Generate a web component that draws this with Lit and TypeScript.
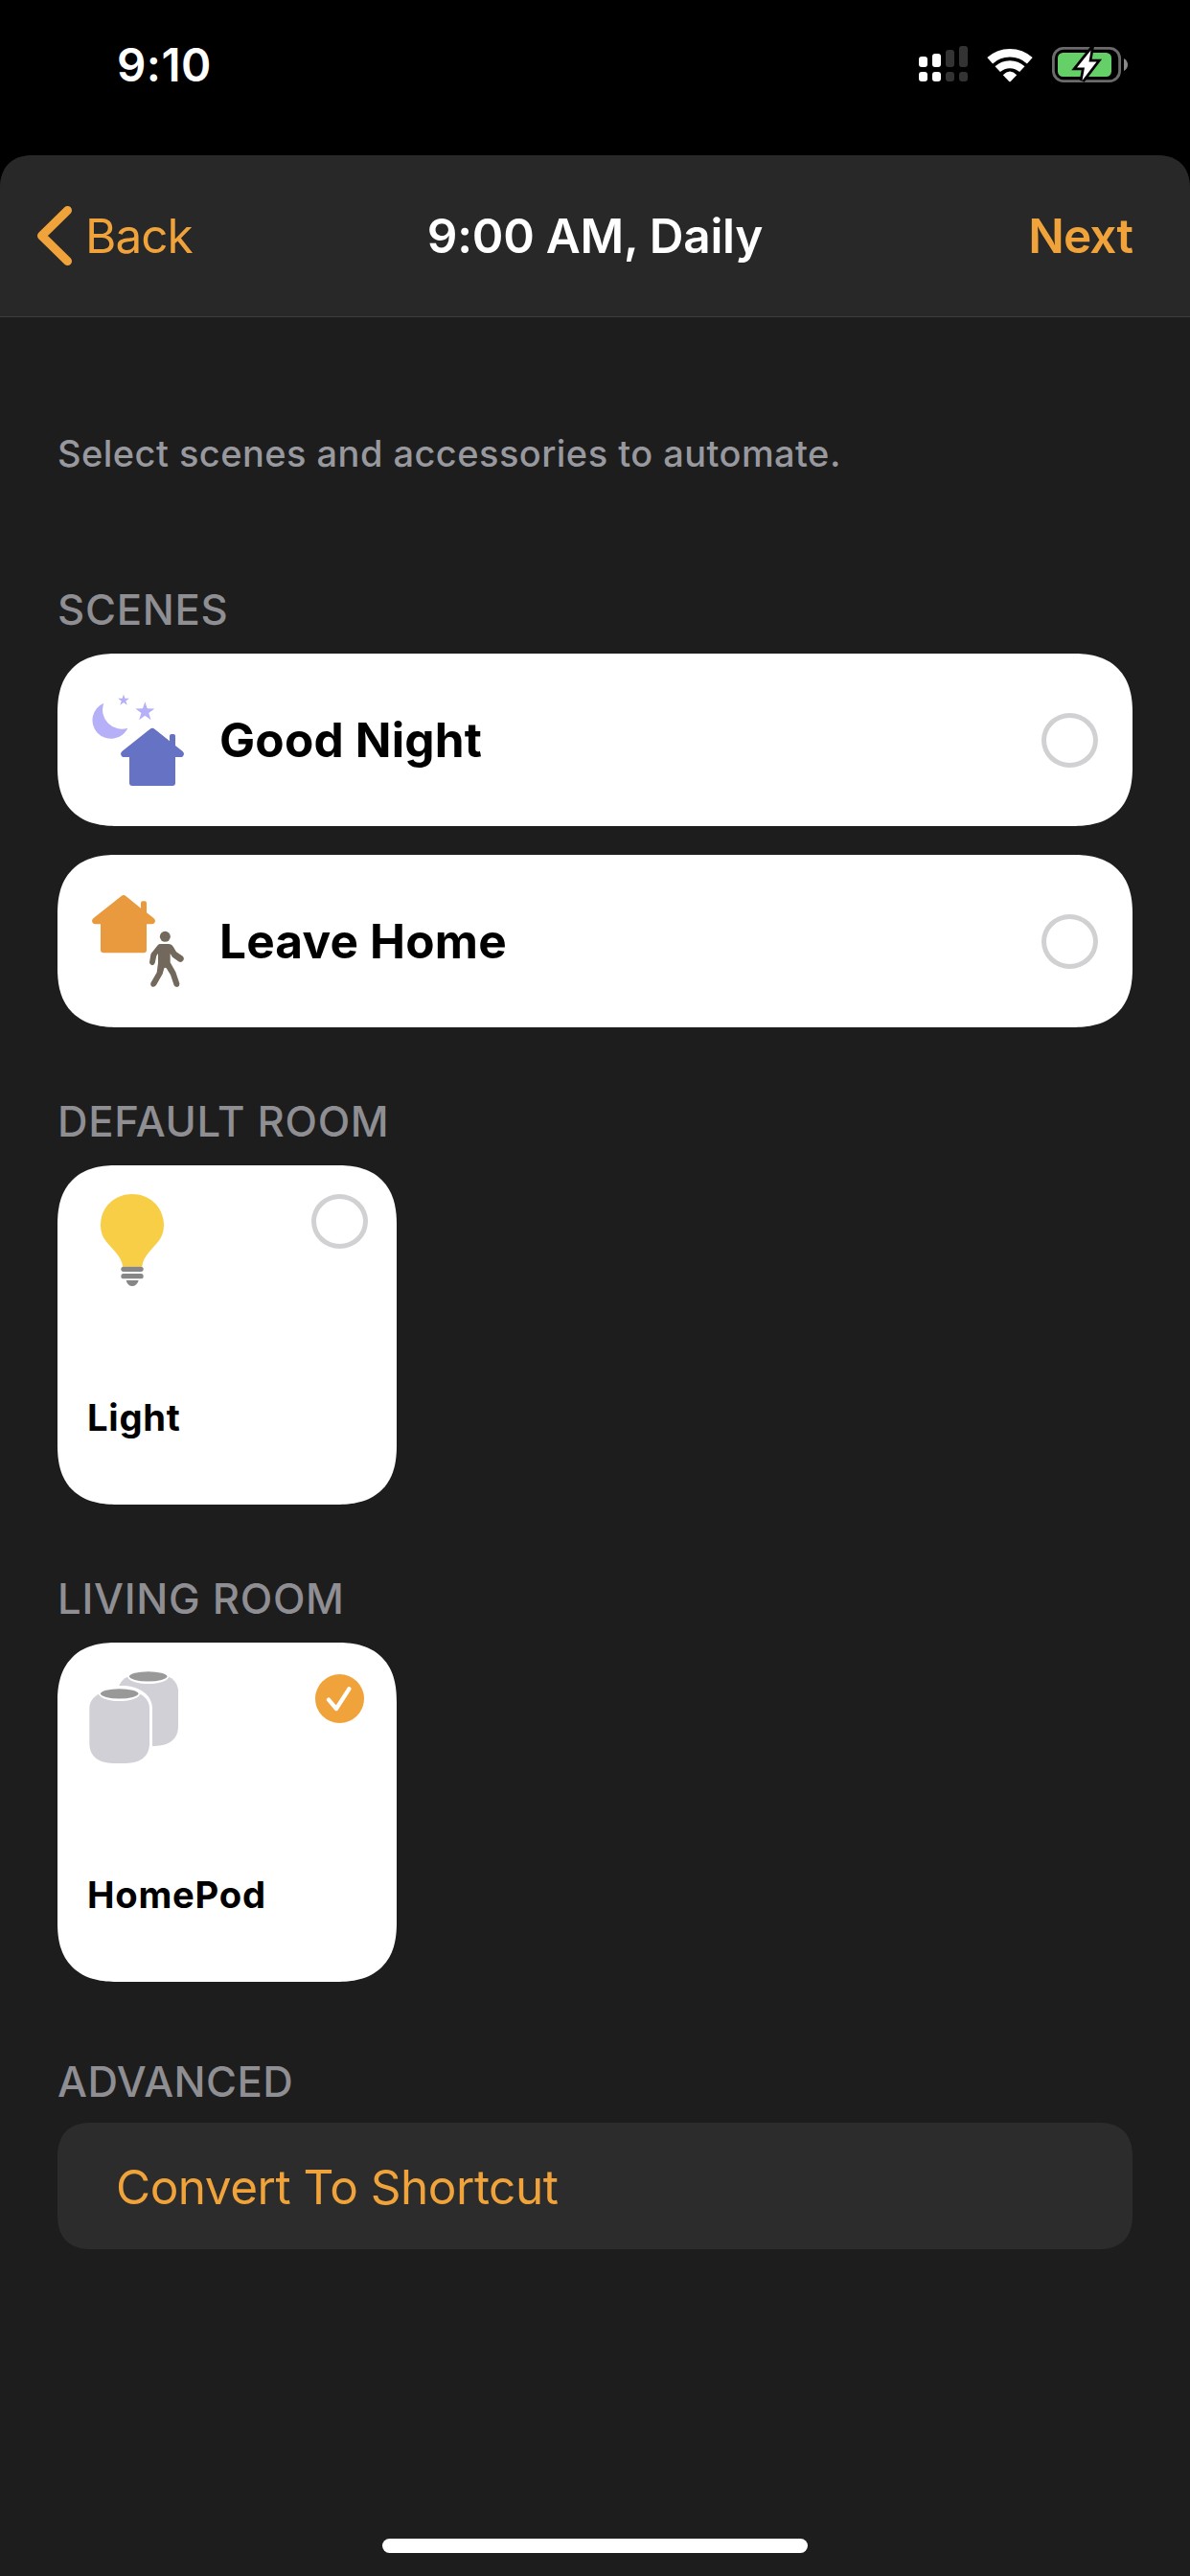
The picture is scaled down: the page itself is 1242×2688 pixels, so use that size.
import { LitElement, html, css, svg } from "lit";
import { customElement, property } from "lit/decorators.js";

const ACCENT = "#f0a33a";

/** House silhouette, drawn in a 198 x 181 area with its origin at the top left. */
const house = (x: number, y: number, fill: string) => svg`
  <path transform="translate(${x} ${y})" fill=${fill}
    d="M92 3 Q99 -3 106 3 L153 41 V25 Q153 19 159 19 H165 Q171 19 171 25 V55 L193 72 Q198 76 198 81 Q196 91 188 91 H171 V172 Q171 181 162 181 H36 Q27 181 27 172 V91 H10 Q2 91 0 81 Q0 76 5 72 Z"/>`;

const star = (cx: number, cy: number, r: number) => {
  const points = Array.from({ length: 10 }, (_, i) => {
    const radius = i % 2 ? r * 0.39 : r;
    const angle = (Math.PI / 5) * i - Math.PI / 2;
    return `${(cx + radius * Math.cos(angle)).toFixed(1)},${(cy + radius * Math.sin(angle)).toFixed(1)}`;
  }).join(" ");
  return svg`<polygon fill="#b5b0f8" points=${points}/>`;
};

const homePod = (x: number, y: number) => svg`
  <g transform="translate(${x} ${y})">
    <path fill="#d1d0d6" d="M36 14 C14 22 0 40 0 62 V172 C0 211 27 234 75 234 H113 C161 234 188 211 188 172 V62 C188 40 174 22 152 14 Z"/>
    <ellipse cx="94" cy="15" rx="65" ry="24" fill="#fff"/>
    <ellipse cx="94" cy="16" rx="59" ry="15.5" fill="#999"/>
  </g>`;

const ICONS: Record<string, unknown> = {
  night: svg`
    <path fill="#b5b0f8" d="M37 29 A58 58 0 1 0 112 107 A60 60 0 0 1 37 29 Z"/>
    ${star(99, 20, 18.5)}
    ${star(166, 56, 31.5)}
    ${house(90, 107, "#6672c4")}`,
  leave: svg`
    ${house(0, 0, "#e99a3e")}
    <circle cx="229" cy="130" r="16.5" fill="#72685b"/>
    <path fill="#72685b" d="M214 153 H240 Q249 153 255 163 L264 178 L284 191 Q290 197 286 204 Q280 213 271 208 L252 194 L245 183 V211 L262 241 L274 276 Q275 286 267 288 Q260 288 257 283 L246 250 L233 229 Q229 226 226 229 L221 247 L201 282 Q196 289 189 287 Q182 284 184 275 L203 242 L207 212 V183 L202 190 L197 213 Q194 220 188 220 Q181 219 180 211 L184 186 Q186 180 190 177 L206 157 Q210 153 214 153 Z"/>`,
  bulb: svg`
    <path fill="#f8ce47" d="M114 227 C113 195 76 168 57 141 C49 129 45 115 45 97 C45 42 88 0 144 0 C200 0 243 42 243 97 C243 115 239 129 231 141 C212 168 176 195 175 227 Z"/>
    <g fill="#868686">
      <rect x="109" y="227" width="70" height="16" rx="8"/>
      <rect x="109" y="249" width="70" height="16" rx="8"/>
      <path d="M125 270 H164 C160 282 153 288 144 288 C135 288 128 282 125 270 Z"/>
    </g>`,
  homepod: svg`
    ${homePod(100, 0)}
    <path fill="#fff" d="M96 45 H110 C168 45 207 74 207 118 V234 L180 288 H96 Z"/>
    ${homePod(10, 54)}`,
};

@customElement("home-icon")
class HomeIcon extends LitElement {
  static styles = css`
    :host { display: block; width: 96px; height: 96px; flex: none; }
    .art { display: block; width: 96px; height: 96px; overflow: visible; }
  `;
  @property() name = "";
  render() {
    return html`<svg class="art" viewBox="0 0 288 288" aria-hidden="true">${ICONS[this.name]}</svg>`;
  }
}

@customElement("select-mark")
class SelectMark extends LitElement {
  static styles = css`
    :host { display: flex; align-items: center; justify-content: center; width: 59px; height: 57px; flex: none; }
    .ring { box-sizing: border-box; width: 59px; height: 57px; border: 5px solid #d1d1d3; border-radius: 50%; }
    .check { display: block; width: 51px; height: 51px; }
  `;
  @property({ type: Boolean }) checked = false;
  render() {
    return this.checked
      ? html`<svg class="check" viewBox="0 0 153 153">
          <circle cx="76.5" cy="76.5" r="76.5" fill=${ACCENT}/>
          <path d="M42 80 L66 108 L106 46" fill="none" stroke="#fff" stroke-width="13" stroke-linecap="round" stroke-linejoin="round"/>
        </svg>`
      : html`<div class="ring"></div>`;
  }
}

@customElement("status-bar")
class StatusBar extends LitElement {
  static styles = css`
    :host { display: flex; justify-content: space-between; align-items: flex-start; height: 162px; padding: 0 65px 0 122px; box-sizing: border-box; }
    .time { margin-top: 38px; font-size: 47.5px; line-height: 60px; font-weight: 600; letter-spacing: 0.46px; color: #fff; }
    .glyphs { display: flex; gap: 20px; margin-top: 48px; }
    .glyph { display: block; height: 38px; }
    .signal { width: 51px; }
    .wifi { width: 48px; }
    .battery { width: 79px; }
  `;
  render() {
    const bars = [
      { x: 0, top: 11, fill: "#fff" },
      { x: 14, top: 8, fill: "#fff" },
      { x: 28, top: 4, fill: "#333" },
      { x: 42, top: 0, fill: "#333" },
    ];
    return html`
      <div class="time">9:10</div>
      <div class="glyphs">
        <svg class="glyph signal" viewBox="0 0 51 38">
          ${bars.map((b) => svg`
            <rect x=${b.x} y=${b.top} width="9" height=${22 - b.top} rx="3" fill=${b.fill}/>
            <rect x=${b.x} y="27" width="9" height="10" rx="3" fill=${b.fill}/>`)}
        </svg>
        <svg class="glyph wifi" viewBox="0 0 48 38">
          <g fill="none" stroke="#fff">
            <path stroke-width="8.6" d="M3.2 15.2 A31 31 0 0 1 44.8 15.2"/>
            <path stroke-width="8" d="M11.2 24.1 A19 19 0 0 1 36.8 24.1"/>
          </g>
          <path fill="#fff" d="M16.8 30.2 Q20.3 26.6 24 26.6 Q27.7 26.6 31.2 30.2 L24.8 37 Q24 37.7 23.2 37 Z"/>
        </svg>
        <svg class="glyph battery" viewBox="0 0 79 38">
          <rect x="1.4" y="2.4" width="69.2" height="34.2" rx="10.5" fill="none" stroke="#6b6b6b" stroke-width="2.8"/>
          <rect x="6" y="7" width="56" height="25" rx="5.5" fill="#65cf68"/>
          <path d="M75 13 Q79 15.5 79 19.5 Q79 23.5 75 26 Z" fill="#8a8a8a"/>
          <path d="M40.5 4.5 L26 22.6 H34 L31.5 36 L46.5 16.4 H38.5 Z" fill="#fff" stroke="#000" stroke-width="5.5" paint-order="stroke"/>
        </svg>
      </div>`;
  }
}

@customElement("scene-row")
class SceneRow extends LitElement {
  static styles = css`
    :host { display: flex; align-items: center; height: 180px; box-sizing: border-box; padding: 0 36px; background: #fff; border-radius: 62px; corner-shape: superellipse(1.28); }
    .label { flex: 1; margin-left: 37px; font-size: 49.5px; line-height: 60px; font-weight: 700; letter-spacing: 0.2px; color: #000; }
  `;
  @property() label = "";
  @property() icon = "";
  render() {
    return html`
      <home-icon name=${this.icon}></home-icon>
      <div class="label">${this.label}</div>
      <select-mark></select-mark>`;
  }
}

@customElement("accessory-tile")
class AccessoryTile extends LitElement {
  static styles = css`
    :host { display: flex; flex-direction: column; justify-content: space-between; width: 354px; height: 354px; box-sizing: border-box; padding: 30px 30px 67px; background: #fff; border-radius: 62px; corner-shape: superellipse(1.28); }
    .top { display: flex; justify-content: space-between; align-items: flex-start; }
    .label { padding-left: 1px; font-size: 38.2px; line-height: 48px; font-weight: 700; letter-spacing: 0.75px; color: #000; }
  `;
  @property() label = "";
  @property() icon = "";
  @property({ type: Boolean }) checked = false;
  render() {
    return html`
      <div class="top">
        <home-icon name=${this.icon}></home-icon>
        <select-mark ?checked=${this.checked}></select-mark>
      </div>
      <div class="label">${this.label}</div>`;
  }
}

@customElement("app-root")
class AppRoot extends LitElement {
  static styles = css`
    :host { display: flex; flex-direction: column; width: 1242px; height: 2688px; overflow: hidden; background: #000; font-family: Inter, "Liberation Sans", sans-serif; }
    .sheet { flex: 1; display: flex; flex-direction: column; background: #1d1d1d; border-radius: 36px 36px 0 0; corner-shape: superellipse(1.28); overflow: hidden; }
    .nav { display: grid; grid-template-columns: 1fr auto 1fr; align-items: center; height: 169px; box-sizing: border-box; padding: 0 60px; background: #282828; border-bottom: 1px solid #3d3d3d; font-size: 49.5px; line-height: 60px; }
    .back { display: flex; align-items: center; margin-left: -22px; color: #f0a33a; letter-spacing: -1px; }
    .chevron { display: block; width: 38px; height: 64px; margin-right: 13px; }
    .title { color: #fff; font-weight: 600; letter-spacing: -0.25px; }
    .next { justify-self: end; color: #f0a33a; font-weight: 600; letter-spacing: -0.89px; }
    .content { flex: 1; display: flex; flex-direction: column; padding: 118px 60px 0; }
    .note { margin: 0 0 42px; font-size: 38px; line-height: 48px; font-weight: 450; letter-spacing: 0.45px; color: #98989f; }
    .heading { margin: 73px 0 19px; font-size: 43.7px; line-height: 52px; font-weight: 550; letter-spacing: 0.7px; color: #8e8e93; }
    .note + .heading { margin-top: 72px; }
    .advanced { margin: 79px 0 16px; letter-spacing: 0.45px; }
    .scenes { display: flex; flex-direction: column; gap: 30px; }
    .shortcut { display: flex; align-items: center; height: 132px; padding: 2px 61px 0; box-sizing: border-box; background: #2c2c2c; border-radius: 36px; corner-shape: superellipse(1.28); color: #f0a33a; font-size: 49.5px; line-height: 60px; letter-spacing: -0.5px; }
    .home-bar { align-self: center; width: 444px; height: 15px; margin-bottom: 24px; border-radius: 8px; background: #fff; }
  `;
  render() {
    return html`
      <status-bar></status-bar>
      <div class="sheet">
        <div class="nav">
          <div class="back">
            <svg class="chevron" viewBox="0 0 38 64">
              <path d="M32.5 5.5 L5.5 32 L32.5 58.5" fill="none" stroke=${ACCENT} stroke-width="9" stroke-linecap="round" stroke-linejoin="round"/>
            </svg>
            <span>Back</span>
          </div>
          <div class="title">9:00 AM, Daily</div>
          <div class="next">Next</div>
        </div>
        <div class="content">
          <p class="note">Select scenes and accessories to automate.</p>
          <div class="heading">SCENES</div>
          <div class="scenes">
            <scene-row label="Good Night" icon="night"></scene-row>
            <scene-row label="Leave Home" icon="leave"></scene-row>
          </div>
          <div class="heading">DEFAULT ROOM</div>
          <accessory-tile label="Light" icon="bulb"></accessory-tile>
          <div class="heading">LIVING ROOM</div>
          <accessory-tile label="HomePod" icon="homepod" checked></accessory-tile>
          <div class="heading advanced">ADVANCED</div>
          <div class="shortcut">Convert To Shortcut</div>
        </div>
        <div class="home-bar"></div>
      </div>`;
  }
}
